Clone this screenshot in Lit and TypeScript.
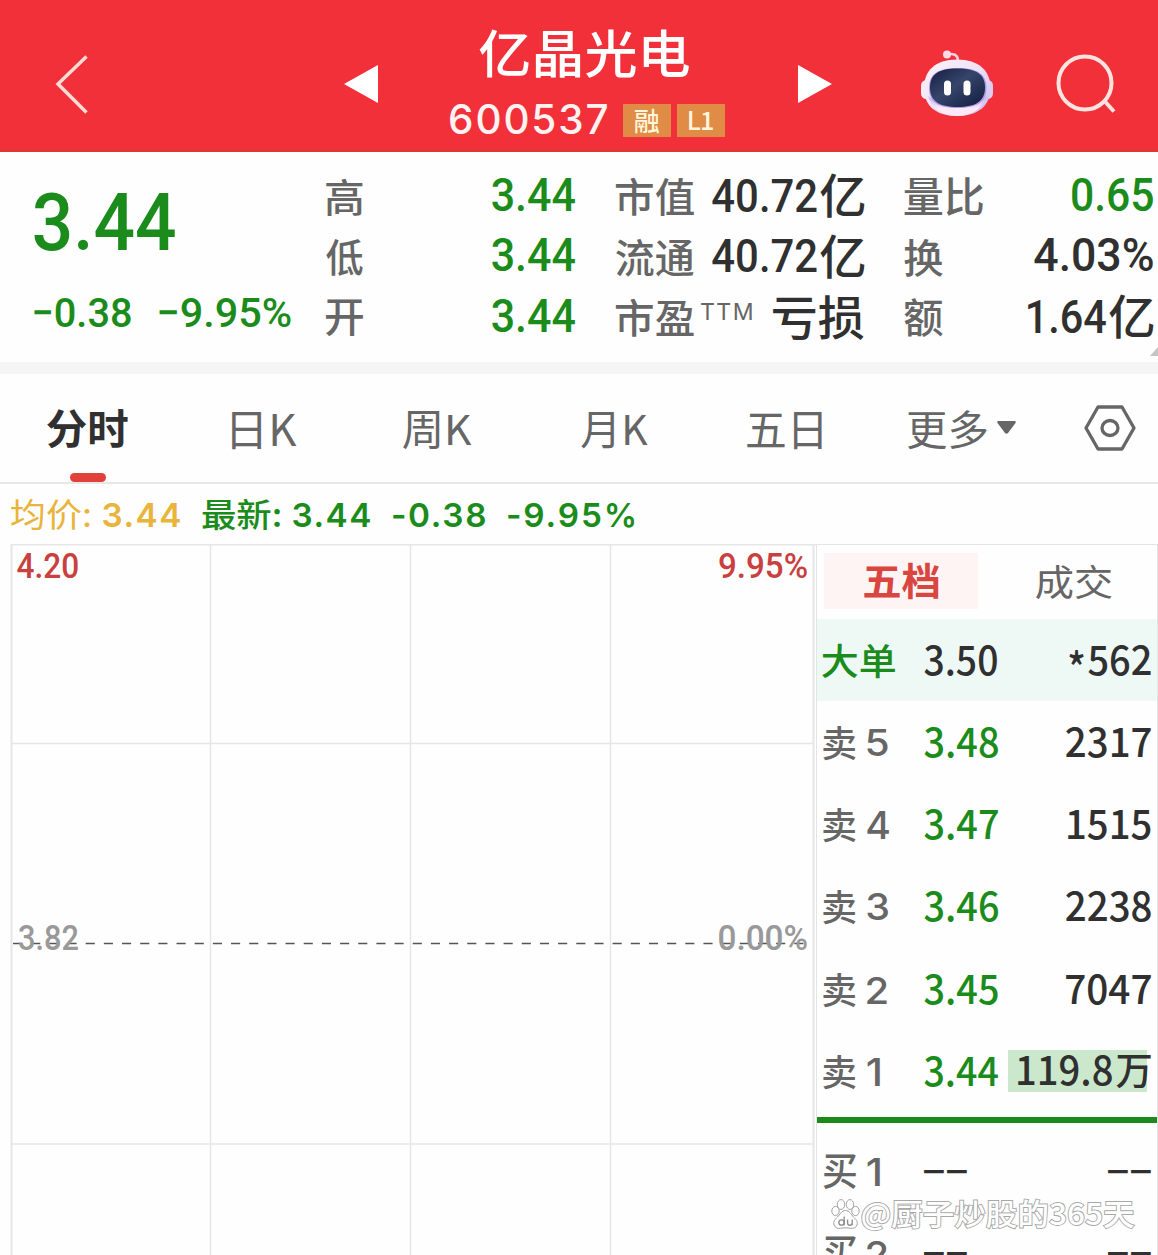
import { LitElement, html, css, svg, nothing } from "lit";
import { customElement, property } from "lit/decorators.js";

/**
 * Text whose glyphs fill a box of w × h pixels exactly. The width is reached
 * by condensing the glyphs, or by letter-spacing when `spaced` is set.
 */
@customElement("ink-text")
class InkText extends LitElement {
  @property() text = "";
  @property({ type: Number }) w = 0;
  @property({ type: Number }) h = 0;
  @property({ type: Boolean }) spaced = false;

  static styles = css`
    :host { display: block; flex: none; white-space: nowrap; }
    .box { display: block; }
    .run { display: block; width: max-content; line-height: 1; transform-origin: 0 0; }
  `;

  updated() {
    const run = this.renderRoot.querySelector(".run") as HTMLElement;
    const cs = getComputedStyle(this);
    const ctx = document.createElement("canvas").getContext("2d")!;
    ctx.font = `${cs.fontWeight} 1000px ${cs.fontFamily}`;
    const m = ctx.measureText(this.text);
    const inkH = m.actualBoundingBoxAscent + m.actualBoundingBoxDescent;
    const inkW = m.actualBoundingBoxLeft + m.actualBoundingBoxRight;
    const k = this.h / inkH;
    const fs = 1000 * k;
    const asc = Math.round(m.fontBoundingBoxAscent * k);
    const desc = Math.round(m.fontBoundingBoxDescent * k);
    const base = Math.floor((fs - asc - desc) / 2) + asc;
    const top = base - m.actualBoundingBoxAscent * k;
    const gaps = this.text.length - 1;
    let sx = this.w / (inkW * k);
    if (this.spaced && gaps > 0) {
      run.style.letterSpacing = `${(this.w - inkW * k) / gaps}px`;
      sx = 1;
    }
    run.style.fontSize = `${fs}px`;
    run.style.transform = `scaleX(${sx}) translate(${m.actualBoundingBoxLeft * k}px, ${-top}px)`;
  }

  render() {
    return html`<span class="box" style="width:${this.w}px;height:${this.h}px"><span class="run">${this.text}</span></span>`;
  }
}

const t = (text: string, w: number, h: number, cls = "", spaced = false) =>
  html`<ink-text class=${cls} .text=${text} .w=${w} .h=${h} .spaced=${spaced}></ink-text>`;

const robot = svg`
  <defs>
    <linearGradient id="shell" x1="0" y1="0" x2="1" y2="1">
      <stop offset="0" stop-color="#fff3f8"/><stop offset=".5" stop-color="#efe2f7"/><stop offset="1" stop-color="#c9b4ee"/>
    </linearGradient>
    <linearGradient id="chin" x1="0" y1="0" x2="0" y2="1">
      <stop offset="0" stop-color="#b9a6f2"/><stop offset=".6" stop-color="#fbe9f7"/>
    </linearGradient>
    <linearGradient id="visor" x1="0" y1="0" x2="1" y2="1">
      <stop offset="0" stop-color="#161d42"/><stop offset=".45" stop-color="#36456a"/><stop offset="1" stop-color="#101a3e"/>
    </linearGradient>
  </defs>
  <path d="M26 4.500c6-1.500 11 0 11 6.500" fill="none" stroke="#f7cfe0" stroke-width="2.600"/>
  <circle cx="26" cy="4.500" r="4" fill="#ffd9e4"/>
  <rect x="0" y="30" width="12" height="19" rx="5.500" fill="#f6ebfa"/>
  <rect x="60" y="30" width="12" height="19" rx="5.500" fill="#dccdf5"/>
  <path d="M36 9.500C58 9.500 69.500 21 69.500 38S58 66 36 66 3 55 3 38 14 9.500 36 9.500Z" fill="url(#shell)"/>
  <path d="M7 46c5 13 14 20 29 20s25-7 30-20c-8 10-50 10-59 0Z" fill="url(#chin)"/>
  <path d="M36.500 18C56 18 65.500 24 65.500 38S56 58 36.500 58 8 52 8 38 17 18 36.500 18Z" fill="#a99ae8"/>
  <path d="M36.500 18.500C55 18.500 64 24 64 37.500S55 57 36.500 57 9 51 9 37.500 18 18.500 36.500 18.500Z" fill="url(#visor)"/>
  <rect x="23" y="30.500" width="7" height="15" rx="3.500" fill="#fff"/>
  <rect x="42.500" y="30.500" width="7" height="15" rx="3.500" fill="#fff"/>`;

const paw = svg`
  <g fill="#fff" stroke="#a2a2a2" stroke-width="1">
    <ellipse cx="4.500" cy="12" rx="3.700" ry="4.600"/>
    <ellipse cx="10" cy="5.500" rx="3.700" ry="4.900"/>
    <ellipse cx="19" cy="5.500" rx="3.700" ry="4.900"/>
    <ellipse cx="24.500" cy="12" rx="3.700" ry="4.600"/>
    <path d="M14.500 11.500c4 0 5.500 4 8 6.500 2.500 2.400 4.600 4.700 3.500 8-1 3-4 3.800-6.500 3.300-3.500-.6-6.500-.6-10 0C7 29.800 4 29 3 26c-1.100-3.300 1-5.600 3.500-8 2.500-2.500 4-6.500 8-6.500Z"/>
  </g>
  <g fill="none" stroke="#8d8d8d" stroke-width="1.300">
    <circle cx="10.500" cy="23.500" r="2.700"/><path d="M13.200 17.500v8.700M16.600 20.500v3.500c0 3 4.600 3 4.600 0v-3.500v5.700"/>
  </g>`;

interface Level { side: string; n: string; nw: number; price?: string; qty?: string; qw?: number; hot?: boolean }
const asks: Level[] = [
  { side: "卖", n: "5", nw: 21, price: "3.48", qty: "2317", qw: 85 },
  { side: "卖", n: "4", nw: 22, price: "3.47", qty: "1515", qw: 83 },
  { side: "卖", n: "3", nw: 21, price: "3.46", qty: "2238", qw: 85 },
  { side: "卖", n: "2", nw: 20, price: "3.45", qty: "7047", qw: 85 },
  { side: "卖", n: "1", nw: 13, price: "3.44", qty: "119.8", qw: 94, hot: true },
];
const bids: Level[] = [
  { side: "买", n: "1", nw: 13 },
  { side: "买", n: "2", nw: 20 },
];

@customElement("app-root")
class AppRoot extends LitElement {
  static styles = css`
    :host {
      display: block; width: 1158px; height: 1255px; overflow: hidden; background: #fefefe;
      font-family: "Noto Sans CJK SC", "Noto Sans", sans-serif; font-weight: 400; color: #666;
    }
    * { box-sizing: border-box; }
    svg { display: block; flex: none; overflow: visible; }
    .din { font-family: Roboto, "Noto Sans CJK SC", sans-serif; font-weight: 500; }
    .inter { font-family: Inter, "Noto Sans CJK SC", sans-serif; font-weight: 600; }
    .im { font-family: Inter, "Noto Sans CJK SC", sans-serif; font-weight: 500; }
    .ir { font-family: Inter, "Noto Sans CJK SC", sans-serif; font-weight: 400; }
    .m { font-weight: 500; }
    .b { font-weight: 700; }
    .green { color: #1b8c1b; }
    .dark { color: #303030; }
    .red { color: #c9403f; }

    .head { height: 152px; background: #f13039; border-bottom: 3px solid #e23539; display: flex; align-items: flex-start; color: #fff3f1; }
    .back { margin: 54px 0 0 55px; }
    .prev { margin: 64.500px 0 0 256px; }
    .title { width: 276px; margin: 29px 0 0 72px; display: flex; flex-direction: column; }
    .name { margin-left: 29px; color: #fff; }
    .code { display: flex; margin-top: 26px; }
    .tag { width: 48px; height: 33px; background: #e08c46; display: flex; align-items: center; justify-content: center; color: #fff6dc; }
    .tag.first { margin: 0 6px 0 16px; }
    .next { margin: 64.500px 0 0 72px; }
    .bot { margin: 50px 0 0 89px; }
    .find { margin: 54px 0 0 63px; }

    .quote { height: 210px; display: flex; position: relative; }
    .now { width: 292px; padding: 39px 0 0 34px; }
    .delta { display: flex; gap: 28px; margin-top: 46px; }
    .stats { display: grid; grid-template-rows: 60.500px 60.500px 60px; padding-top: 15px; height: 197px; }
    .stat { display: flex; justify-content: space-between; align-items: center; }
    .s1 { width: 249px; margin-left: 34px; }
    .s2 { width: 248px; margin-left: 41px; }
    .s3 { width: 249px; margin-left: 40px; }
    .lift { margin-bottom: 5px; }
    .sum { display: flex; align-items: center; gap: 3px; margin-bottom: 3px; }
    .pe { display: flex; gap: 7px; }
    .ttm { padding-top: 4px; }
    .corner { position: absolute; right: 0; bottom: 6px; }

    .band { height: 12px; background: #f5f5f5; }

    .tabs { height: 110px; border-bottom: 2px solid #e8e8e8; display: flex; padding: 36px 0 0 47px; }
    .tab { height: 72px; padding-top: 1.500px; }
    .on { display: flex; flex-direction: column; align-items: center; justify-content: space-between; padding-top: 0; }
    .t2 { margin-left: 104px; }
    .t3 { margin-left: 106px; }
    .t4 { margin-left: 109px; }
    .t5 { margin-left: 99px; }
    .t6 { margin-left: 86px; padding-top: .5px; }
    .bar { width: 36px; height: 9px; border-radius: 5px; background: #e2403a; }
    .caret { margin: 11px 0 0 10px; }
    .gear { margin: -5px 0 0 68px; }

    .avg { height: 60px; display: flex; padding: 15px 0 0 11px; color: #e9b43c; }
    .avg .n { margin-top: 3px; }
    .g13 { margin-left: 13px; }
    .g22 { margin-left: 22px; }
    .g23 { margin-left: 23px; }

    .main { display: flex; height: 711px; }
    .chart { width: 816px; position: relative; }
    .lab { position: absolute; }
    .hi { left: 17px; top: 9px; }
    .hip { left: 719px; top: 9px; }
    .mid { left: 19px; top: 381px; color: #999; }
    .midp { left: 719px; top: 381px; color: #999; }

    .book { width: 342px; border: solid #e4e4e4; border-width: 1px 1px 0 1px; }
    .switch { height: 74px; padding: 8px 0 0 7px; display: flex; }
    .seg { width: 154px; height: 56px; display: flex; align-items: center; justify-content: center; }
    .seg.sel { background: #fff4f4; color: #d9453f; }
    .seg.off { margin-left: 19px; }
    .row { height: 82.200px; display: flex; align-items: center; padding: 3px 6px 0 6px; }
    .big { background: #eef9f6; height: 81.500px; padding-left: 5px; padding-top: 2px; }
    .who { width: 101px; display: flex; align-items: center; gap: 11px; }
    .big .who { width: 102px; }
    .qty { margin-left: auto; display: flex; align-items: center; gap: 4px; }
    .star { margin-bottom: 7px; }
    .hot { width: 143px; height: 42px; margin-left: auto; margin-top: -2px; padding-top: 1px; display: flex; gap: 4px; align-items: center; justify-content: flex-end;
      background: linear-gradient(#cce8cc, #cce8cc) 0 0 / 139px 42px no-repeat; }
    .none { display: flex; gap: 3px; }
    .split { height: 6px; background: #1b8a1b; margin: 6px 0; }

    .mark { position: absolute; left: 831px; top: 1199px; display: flex; gap: 2px; align-items: flex-start; }
    .mark ink-text { color: #fff; -webkit-text-stroke: 1.800px #a8a8a8; paint-order: stroke fill; margin-top: 1px; }
    .page { position: relative; height: 1255px; overflow: hidden; }
  `;

  private none() {
    return html`<div class="none">${t("–", 20, 4, "m dark")}${t("–", 20, 4, "m dark")}</div>`;
  }

  private level(l: Level) {
    return html`<div class="row">
      <div class="who">${t(l.side, 33, 34, "m")}${t(l.n, l.nw, 28, "im")}</div>
      ${l.price ? t(l.price, 74, 30, "m green") : this.none()}
      <div class=${l.hot ? "hot" : "qty"}>
        ${l.qty ? t(l.qty, l.qw!, 30, "m dark") : this.none()}
        ${l.hot ? t("万", 35, 33, "m dark") : nothing}
      </div>
    </div>`;
  }

  private stat(label: unknown, value: unknown) {
    return html`<div class="stat">${label}${value}</div>`;
  }

  private sum(n: string, w: number) {
    return html`<div class="sum">${t(n, w, 34, "din dark")}${t("亿", 44.5, 43.5, "m dark")}</div>`;
  }

  render() {
    return html`<div class="page">
      <header class="head">
        <svg class="back" width="33" height="60" viewBox="0 0 33 60"><path d="M31.500 2.500 3 30l28.500 28.500" fill="none" stroke="#ffdcd6" stroke-width="3.500"/></svg>
        <svg class="prev" width="34" height="38" viewBox="0 0 34 38"><path d="M34 0v38L0 19Z" fill="#fff"/></svg>
        <div class="title">
          <div class="name">${t("亿晶光电", 210, 49, "m")}</div>
          <div class="code">${t("600537", 157, 31, "im", true)}
            <span class="tag first">${t("融", 24, 24, "m")}</span><span class="tag">${t("L1", 24, 19, "m", true)}</span>
          </div>
        </div>
        <svg class="next" width="34" height="38" viewBox="0 0 34 38"><path d="M0 0v38l34-19Z" fill="#fff"/></svg>
        <svg class="bot" width="72" height="66" viewBox="0 0 72 66">${robot}</svg>
        <svg class="find" width="60" height="60" viewBox="0 0 60 60" fill="none" stroke="#ffe3df" stroke-width="4"><ellipse cx="29" cy="29" rx="26.500" ry="26.500"/><path d="M48 46.500 58 57.500"/></svg>
      </header>

      <section class="quote">
        <div class="now">
          ${t("3.44", 141, 60, "din green")}
          <div class="delta">${t("−0.38", 97, 31, "din green")}${t("−9.95%", 132, 31, "din green")}</div>
        </div>
        <div class="stats s1">
          ${this.stat(t("高", 37, 37, "m"), t("3.44", 83, 34, "din green lift"))}
          ${this.stat(t("低", 37, 37, "m"), t("3.44", 83, 34, "din green lift"))}
          ${this.stat(t("开", 37, 36, "m"), t("3.44", 83, 34, "din green lift"))}
        </div>
        <div class="stats s2">
          ${this.stat(t("市值", 78, 38, "m"), this.sum("40.72", 104.5))}
          ${this.stat(t("流通", 78, 38, "m"), this.sum("40.72", 104.5))}
          ${this.stat(html`<div class="pe">${t("市盈", 78, 38, "m")}<div class="ttm">${t("TTM", 51, 17, "ir", true)}</div></div>`, html`<div class="sum">${t("亏损", 91, 44, "m dark")}</div>`)}
        </div>
        <div class="stats s3">
          ${this.stat(t("量比", 79, 38, "m"), t("0.65", 81, 34, "din green lift"))}
          ${this.stat(t("换", 39, 38, "m"), t("4.03%", 119, 34, "din dark lift"))}
          ${this.stat(t("额", 39, 38, "m"), this.sum("1.64", 78))}
        </div>
        <svg class="corner" width="8" height="9" viewBox="0 0 8 9"><path d="M8 0v9H0Z" fill="#c4c4c4"/></svg>
      </section>
      <div class="band"></div>

      <nav class="tabs">
        <div class="tab on">${t("分时", 81, 38, "b dark")}<i class="bar"></i></div>
        <div class="tab t2">${t("日K", 65, 37)}</div>
        <div class="tab t3">${t("周K", 69, 37)}</div>
        <div class="tab t4">${t("月K", 67, 37)}</div>
        <div class="tab t5">${t("五日", 75, 37)}</div>
        <div class="tab t6">${t("更多", 79, 38)}</div>
        <svg class="caret" width="19" height="13" viewBox="0 0 19 13"><path d="M1 0h17q1.500.5.5 2L11 12q-1.500 1.500-3 0L.5 2Q-.5.5 1 0Z" fill="#666"/></svg>
        <svg class="gear" width="52" height="46" viewBox="0 0 52 46" fill="none" stroke="#666" stroke-width="3.300" stroke-linejoin="round"><path d="M14 2h24l12 21-12 21H14L2 23Z"/><ellipse cx="26" cy="23" rx="8" ry="7.500"/></svg>
      </nav>

      <div class="avg">
        ${t("均价:", 79, 31)}
        <div class="n g13">${t("3.44", 77, 25.5, "inter", true)}</div>
        <div class="g22">${t("最新:", 78, 31, "m green")}</div>
        <div class="n g13">${t("3.44", 77, 25.5, "inter green", true)}</div>
        <div class="n g23">${t("-0.38", 92, 25.5, "inter green", true)}</div>
        <div class="n g23">${t("-9.95%", 126, 25.5, "inter green", true)}</div>
      </div>

      <div class="main">
        <div class="chart">
          <svg width="816" height="711" viewBox="0 0 816 711" fill="none" stroke="#e6e6e6" stroke-width="1.500">
            <path d="M11 .75H816M11 199.500H813M11 600H813M210.500 0V711M410.500 0V711M610.500 0V711"/>
            <path d="M11.500 0V711M813.500 0V711" stroke-width="2"/>
            <path d="M13 399.500H811" stroke="#555" stroke-width="1.500" stroke-dasharray="9.100 9.070"/>
          </svg>
          <div class="lab hi">${t("4.20", 61, 26, "din red")}</div>
          <div class="lab hip">${t("9.95%", 88, 26, "din red")}</div>
          <div class="lab mid">${t("3.82", 59, 26, "din")}</div>
          <div class="lab midp">${t("0.00%", 88, 26, "din")}</div>
        </div>
        <aside class="book">
          <div class="switch">
            <div class="seg sel">${t("五档", 75, 36, "b")}</div>
            <div class="seg off">${t("成交", 76, 35)}</div>
          </div>
          <div class="row big">
            <div class="who">${t("大单", 73, 35, "m green")}</div>
            ${t("3.50", 73, 30, "m dark")}
            <div class="qty">${t("*", 15, 16, "m dark star")}${t("562", 63, 30, "m dark")}</div>
          </div>
          ${asks.map((l) => this.level(l))}
          <div class="split"></div>
          ${bids.map((l) => this.level(l))}
        </aside>
      </div>
      <div class="mark"><svg width="29" height="31" viewBox="0 0 29 31">${paw}</svg>${t("@厨子炒股的365天", 272, 31, "m")}</div>
    </div>`;
  }
}
